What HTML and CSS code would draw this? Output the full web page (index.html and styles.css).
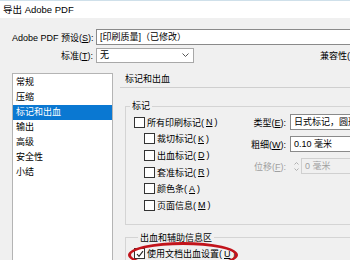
FILE: index.html
```html
<!DOCTYPE html>
<html lang="zh-CN">
<head>
  <meta charset="UTF-8" />
  <title>导出 Adobe PDF</title>
  <link rel="stylesheet" href="styles.css">
</head>
<body>
  <div class="titlebar">导出 Adobe PDF</div>

  <div class="top">
    <div class="row">
      <span class="lbl">Adobe PDF 预设(<u>S</u>):</span>
      <div class="field wide">[印刷质量]（已修改）</div>
    </div>
    <div class="row">
      <span class="lbl">标准(<u>T</u>):</span>
      <div class="field select">
        <span>无</span>
        <svg width="7" height="4" viewBox="0 0 7 4"><path d="M0.5 0.5 L3.5 3.5 L6.5 0.5" fill="none" stroke="#555" stroke-width="1"/></svg>
      </div>
      <span class="compat">兼容性(</span>
    </div>
  </div>

  <div class="main">
    <ul class="nav">
      <li>常规</li>
      <li>压缩</li>
      <li class="active">标记和出血</li>
      <li>输出</li>
      <li>高级</li>
      <li>安全性</li>
      <li>小结</li>
    </ul>

    <div class="panel">
      <div class="panel-head">标记和出血</div>

      <fieldset class="group marks">
        <legend>标记</legend>
        <div class="marks-body">
          <div class="checks">
            <label class="check"><span class="box"></span>所有印刷标记(<u>N</u>)</label>
            <label class="check sub"><span class="box"></span>裁切标记(<u>K</u>)</label>
            <label class="check sub"><span class="box"></span>出血标记(<u>D</u>)</label>
            <label class="check sub"><span class="box"></span>套准标记(<u>R</u>)</label>
            <label class="check sub"><span class="box"></span>颜色条(<u>A</u>)</label>
            <label class="check sub"><span class="box"></span>页面信息(<u>M</u>)</label>
          </div>
          <div class="props">
            <span class="plbl">类型(<u>E</u>):</span>
            <div class="field pfield">日式标记，圆形</div>
            <span class="plbl">粗细(<u>W</u>):</span>
            <div class="field pfield">0.10 毫米</div>
            <span class="plbl off">位移(<u>F</u>):</span>
            <div class="spin">
              <span class="arrows">
                <svg width="5" height="3" viewBox="0 0 5 3"><path d="M0.5 2.5 L2.5 0.5 L4.5 2.5" fill="none" stroke="#b0b0b0"/></svg>
                <svg width="5" height="3" viewBox="0 0 5 3"><path d="M0.5 0.5 L2.5 2.5 L4.5 0.5" fill="none" stroke="#b0b0b0"/></svg>
              </span>
              <div class="field pfield off">0 毫米</div>
            </div>
          </div>
        </div>
      </fieldset>

      <fieldset class="group bleed">
        <legend>出血和辅助信息区</legend>
        <label class="check"><span class="box">
          <svg width="8" height="8" viewBox="0 0 8 8"><path d="M1 4 L3 6.3 L7 1.2" fill="none" stroke="#222" stroke-width="1.1"/></svg>
        </span>使用文档出血设置(<u>U</u>)</label>
        <span class="circle"></span>
      </fieldset>
    </div>
  </div>
</body>
</html>
```

FILE: styles.css
```css
body {
  margin: 0;
  width: 350px;
  height: 260px;
  overflow: hidden;
  background-color: #f0f0f0;
  color: #000;
  font-family: "Liberation Sans", "Noto Sans CJK SC", sans-serif;
  font-size: 9px;
  text-autospace: no-autospace;
}
u {
  text-decoration-thickness: 1px;
  text-underline-offset: 1px;
}
.titlebar {
  height: 18px;
  line-height: 17px;
  padding-left: 3px;
  background: #fff;
  border-top: 1px solid #cfe0ea;
  box-sizing: border-box;
  font-size: 9.5px;
}
.top {
  padding-top: 11px;
  display: flex;
  flex-direction: column;
  gap: 2px;
  height: 55px;
  box-sizing: border-box;
}
.row {
  display: flex;
  align-items: center;
  height: 16px;
  white-space: nowrap;
}
.lbl {
  width: 81px;
  margin-left: 12px;
  margin-right: 3px;
  text-align: right;
  flex-shrink: 0;
}
.field {
  height: 16px;
  line-height: 14px;
  box-sizing: border-box;
  border: 1px solid #8a8a8a;
  background: #fff;
  padding-left: 3px;
  white-space: nowrap;
  overflow: hidden;
}
.wide {
  width: 270px;
  flex-shrink: 0;
}
.select {
  width: 98px;
  height: 15px;
  border-color: #a8a8a8;
  display: flex;
  align-items: center;
  justify-content: space-between;
  padding-right: 4px;
  flex-shrink: 0;
}
.compat {
  margin-left: 126px;
  flex-shrink: 0;
}
.main {
  display: flex;
  align-items: flex-start;
}
.nav {
  list-style: none;
  margin: 0 0 0 12px;
  padding: 1px 0 0;
  width: 101px;
  height: 200px;
  box-sizing: border-box;
  border: 1px solid #b4b4b4;
  background: #fff;
  flex-shrink: 0;
}
.nav li {
  height: 15px;
  line-height: 15px;
  padding-left: 3px;
}
.nav li.active {
  background: #0a78d2;
  color: #fff;
}
.panel {
  margin-left: 7px;
  width: 300px;
  flex-shrink: 0;
}
.panel-head {
  height: 14px;
  line-height: 13px;
  padding-left: 5px;
  border-bottom: 1px solid #cfcfcf;
}
.group {
  position: relative;
  margin: 0 0 0 5px;
  padding: 0;
  border: 1px solid #d4d4d4;
  min-width: 0;
}
.group legend {
  margin-left: 4px;
  padding: 0 2px;
  line-height: 12px;
  height: 12px;
}
.marks {
  margin-top: 12px;
  padding: 2px 0 10px;
}
.marks-body {
  display: flex;
  align-items: flex-start;
}
.checks {
  width: 113px;
  padding-left: 8px;
  flex-shrink: 0;
}
.check {
  display: flex;
  align-items: center;
  gap: 2px;
  height: 16.6px;
  white-space: nowrap;
}
.check.sub {
  padding-left: 10px;
}
.box {
  width: 9px;
  height: 9px;
  border: 1px solid #333;
  background: #fff;
  display: flex;
  align-items: center;
  justify-content: center;
  flex-shrink: 0;
}
.props {
  display: grid;
  grid-template-columns: 39px 120px;
  column-gap: 4px;
  row-gap: 6px;
  align-items: center;
  white-space: nowrap;
}
.plbl {
  text-align: right;
}
.pfield {
  height: 16px;
  line-height: 14px;
}
.off {
  color: #a0a0a0;
}
.spin {
  display: flex;
  align-items: center;
  gap: 2px;
  padding-left: 4px;
}
.arrows {
  display: flex;
  flex-direction: column;
  gap: 3px;
}
.field.off {
  border-color: #d0d0d0;
  background: #f0f0f0;
  flex: 1;
}
.bleed {
  margin-top: 7px;
  padding: 2px 0 10px 8px;
}
.circle {
  position: absolute;
  left: 2px;
  top: -2px;
  width: 110px;
  height: 26px;
  box-sizing: border-box;
  border: 3px solid #c2141b;
  border-radius: 50%;
}
```
